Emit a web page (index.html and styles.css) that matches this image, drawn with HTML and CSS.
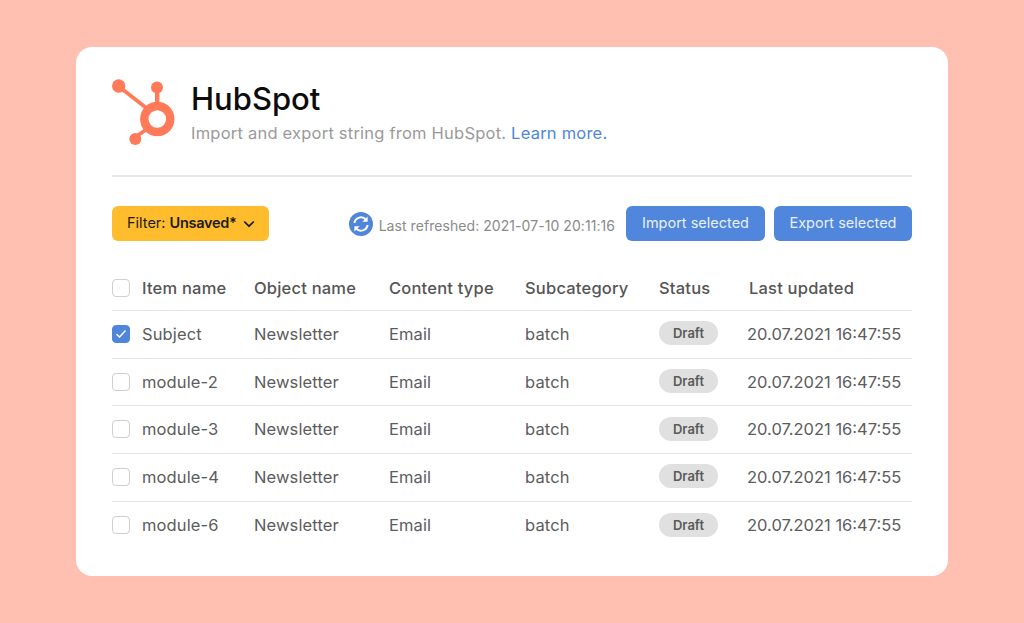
FILE: index.html
```html
<!DOCTYPE html>
<html lang="en">
<head>
<meta charset="utf-8">
<title>HubSpot</title>
<link rel="stylesheet" href="styles.css">
</head>
<body>
<main class="card">
  <header class="head">
    <svg class="logo" width="64" height="68" viewBox="0 0 64 68" aria-hidden="true">
      <g fill="none" stroke="#ff7a59">
        <circle cx="45.3" cy="41" r="13" stroke-width="8.4"/>
        <path d="M7.5 9 L35 30.5" stroke-width="3.8"/>
        <path d="M45.2 12 V25" stroke-width="4.4"/>
        <path d="M22 60 L35 51" stroke-width="3.8"/>
      </g>
      <circle cx="6.7" cy="8" r="6.7" fill="#ff7a59"/>
      <circle cx="45" cy="9.6" r="6" fill="#ff7a59"/>
      <circle cx="23.3" cy="61" r="6" fill="#ff7a59"/>
    </svg>
    <div class="head-text">
      <h1 class="title">HubSpot</h1>
      <p class="sub">Import and export string from HubSpot. <a class="link" href="#">Learn more.</a></p>
    </div>
  </header>

  <div class="toolbar">
    <button class="filter"><span>Filter: <b class="filter-val">Unsaved*</b></span>
      <svg class="chev" width="12" height="8" viewBox="0 0 12 8" aria-hidden="true"><path d="M1.2 1.5 L6 6.2 L10.8 1.5" fill="none" stroke="#1c1c1c" stroke-width="1.7"/></svg>
    </button>
    <div class="refresh">
      <svg class="refresh-icon" width="24" height="24" viewBox="0 0 24 24" aria-hidden="true">
        <circle cx="12" cy="12" r="12" fill="#4f86dc"/>
        <g fill="none" stroke="#fff" stroke-width="2">
          <path d="M5.4 11 A6.7 6.7 0 0 1 17 7.6"/>
          <path d="M18.6 13 A6.7 6.7 0 0 1 7 16.4"/>
        </g>
        <path d="M18.6 4.6 V9.8 H13.4 Z" fill="#fff"/>
        <path d="M5.4 19.4 V14.2 H10.6 Z" fill="#fff"/>
      </svg>
      <span class="refresh-text">Last refreshed: 2021-07-10 20:11:16</span>
    </div>
    <button class="btn btn-import">Import selected</button>
    <button class="btn btn-export">Export selected</button>
  </div>

  <div class="table">
    <div class="row row-head">
      <span class="box"></span><span>Item name</span><span>Object name</span><span>Content type</span><span>Subcategory</span><span>Status</span><span class="head-last">Last updated</span>
    </div>
    <div class="row">
      <span class="box box-on"><svg width="12" height="10" viewBox="0 0 12 10" aria-hidden="true"><path d="M1.5 5.2 L4.6 8 L10.5 1.6" fill="none" stroke="#fff" stroke-width="1.5"/></svg></span>
      <span>Subject</span><span>Newsletter</span><span>Email</span><span>batch</span><span class="pill-cell"><em class="pill">Draft</em></span><span class="date">20.07.2021 16:47:55</span>
    </div>
    <div class="row">
      <span class="box"></span><span>module-2</span><span>Newsletter</span><span>Email</span><span>batch</span><span class="pill-cell"><em class="pill">Draft</em></span><span class="date">20.07.2021 16:47:55</span>
    </div>
    <div class="row">
      <span class="box"></span><span>module-3</span><span>Newsletter</span><span>Email</span><span>batch</span><span class="pill-cell"><em class="pill">Draft</em></span><span class="date">20.07.2021 16:47:55</span>
    </div>
    <div class="row">
      <span class="box"></span><span>module-4</span><span>Newsletter</span><span>Email</span><span>batch</span><span class="pill-cell"><em class="pill">Draft</em></span><span class="date">20.07.2021 16:47:55</span>
    </div>
    <div class="row row-last">
      <span class="box"></span><span>module-6</span><span>Newsletter</span><span>Email</span><span>batch</span><span class="pill-cell"><em class="pill">Draft</em></span><span class="date">20.07.2021 16:47:55</span>
    </div>
  </div>
</main>
</body>
</html>
```
FILE: styles.css
```css
* { box-sizing: border-box; }
html, body { margin: 0; height: 100%; }
body {
  background: #ffc0b2;
  font-family: Inter, "Noto Sans", sans-serif;
  padding: 47px 76px;
  overflow: hidden;
}
.card {
  background: #fff;
  border-radius: 16px;
  height: 529px;
  padding: 31px 36px 0;
}
.head {
  display: flex;
  gap: 15px;
  height: 99px;
  border-bottom: 2px solid #e6e8ea;
}
.logo { flex: none; }
.head-text { padding-top: 3px; }
.title {
  margin: 0;
  font-size: 31px;
  line-height: 36px;
  font-weight: 500;
  color: #0c0c0c;
}
.sub {
  margin: 5px 0 0;
  font-size: 16.5px;
  line-height: 22px;
  letter-spacing: 0.22px;
  color: #9a9a9a;
}
.link { color: #4f86dc; text-decoration: none; }
.toolbar {
  display: flex;
  align-items: center;
  margin-top: 29px;
  height: 35px;
}
.filter {
  display: flex;
  align-items: center;
  width: 157px;
  height: 35px;
  padding: 0 0 2px 15px;
  border: 0;
  border-radius: 6px;
  background: #ffbd2e;
  font: 14.5px Inter, sans-serif;
  color: #1c1c1c;
  white-space: pre;
}
.filter-val { font-weight: 600; letter-spacing: -0.3px; }
.chev { margin-left: 7px; margin-top: 2px; }
.refresh {
  display: flex;
  align-items: center;
  margin-left: auto;
  gap: 6px;
}
.refresh-text { font-size: 14px; letter-spacing: 0.06px; color: #8a8a8a; padding-top: 4px; }
.btn {
  height: 35px;
  width: 139px;
  padding: 0 0 2px;
  border: 0;
  border-radius: 6px;
  background: #5087dd;
  color: #e8f0fb;
  font: 14.5px Inter, sans-serif;
}
.btn-import { margin-left: 11px; }
.btn-export { margin-left: 9px; width: 138px; }
.table { margin-top: 23px; }
.row {
  display: grid;
  grid-template-columns: 30px 112px 135px 136px 134px 89px 1fr;
  align-items: center;
  height: 47.7px;
  padding-bottom: 0.6px;
  border-bottom: 1.5px solid #e4e6e8;
  font-size: 16.5px;
  letter-spacing: 0.12px;
  color: #5c5c5c;
}
.row-head { height: 47px; padding: 1.5px 0 0; font-weight: 500; letter-spacing: 0.2px; color: #555; }
.row-last { border-bottom: 0; }
.head-last { margin-left: 1px; }
.box {
  display: flex;
  align-items: center;
  justify-content: center;
  width: 18px;
  height: 18px;
  border: 1.5px solid #cfcfcf;
  border-radius: 4px;
  background: #fff;
}
.box-on { background: #4f86dc; border-color: #4f86dc; }
.pill-cell { display: flex; padding-bottom: 1.5px; }
.pill {
  display: block;
  width: 59px;
  height: 24px;
  border-radius: 12px;
  background: #e0e0e0;
  color: #5a5a5a;
  font-style: normal;
  font-weight: 600;
  font-size: 13px;
  line-height: 24px;
  letter-spacing: 0;
  text-align: center;
}
.date { margin-left: -1px; letter-spacing: 0; white-space: nowrap; }
```
